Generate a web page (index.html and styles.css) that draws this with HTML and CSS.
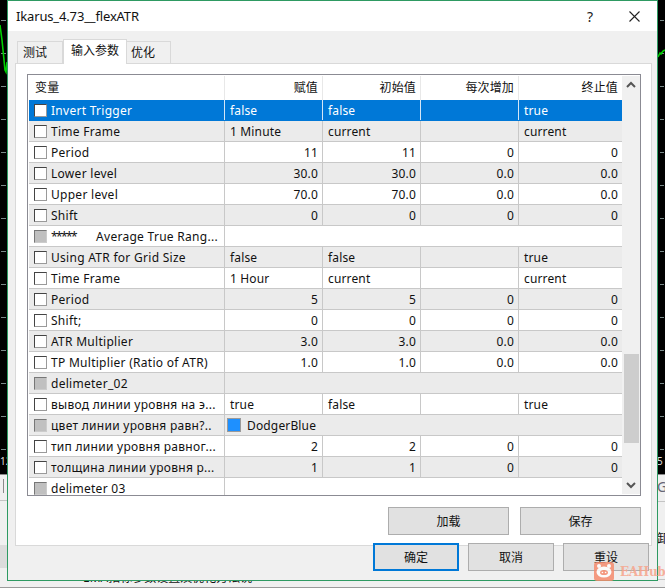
FILE: index.html
```html
<!DOCTYPE html>
<html lang="zh">
<head>
<meta charset="utf-8">
<title>Ikarus_4.73__flexATR</title>
<link rel="stylesheet" href="styles.css">
</head>
<body>
<div class="desktop">
  <div class="strip strip-left"><span class="axis-label">12</span></div>
  <div class="strip strip-right"><span class="axis-label axis-label-right">5</span></div>
  <svg class="chart" width="665" height="80" viewBox="0 0 665 80">
    <polyline points="0,25 2,40 3,50 4,60 5,70 6,72 7,62" fill="none" stroke="#00d000" stroke-width="1.6"/>
    <polyline points="658,57 660,53 661,54 663,51 665,50" fill="none" stroke="#00d000" stroke-width="1.6"/>
  </svg>
  <div class="under-left"><i class="under-tick"></i></div>
  <div class="under-left-band"></div>
  <div class="under-right"><span class="under-g">G</span></div>
  <div class="under-right-band"><span class="under-zh">卸</span></div>
  <div class="under-bottom"><span class="under-text">EMA指标参数设置及优化方法说</span></div>

  <main class="dialog">
    <header class="titlebar">
      <span class="title">Ikarus_4.73__flexATR</span>
      <span class="help">?</span>
      <svg class="close" width="11" height="11" viewBox="0 0 11 11"><path d="M0.5 0.5 L10.5 10.5 M10.5 0.5 L0.5 10.5" stroke="#222" stroke-width="1.1" fill="none"/></svg>
    </header>
    <div class="body">
      <nav class="tabs">
        <span class="tab">测试</span>
        <span class="tab tab-active">输入参数</span>
        <span class="tab tab-last">优化</span>
      </nav>
      <section class="panel">
        <div class="list">
          <div class="table">
            <div class="row head">
              <div class="cell cell-var">变量</div>
              <div class="cell r">赋值</div>
              <div class="cell r">初始值</div>
              <div class="cell r">每次增加</div>
              <div class="cell r">终止值</div>
            </div>
            <div class="row selected"><div class="cell name"><i class="check"></i>Invert Trigger</div><div class="cell">false</div><div class="cell">false</div><div class="cell"></div><div class="cell">true</div></div>
            <div class="row alt"><div class="cell name"><i class="check"></i>Time Frame</div><div class="cell">1 Minute</div><div class="cell">current</div><div class="cell"></div><div class="cell">current</div></div>
            <div class="row"><div class="cell name"><i class="check"></i>Period</div><div class="cell r">11</div><div class="cell r">11</div><div class="cell r">0</div><div class="cell r">0</div></div>
            <div class="row alt"><div class="cell name"><i class="check"></i>Lower level</div><div class="cell r">30.0</div><div class="cell r">30.0</div><div class="cell r">0.0</div><div class="cell r">0.0</div></div>
            <div class="row"><div class="cell name"><i class="check"></i>Upper level</div><div class="cell r">70.0</div><div class="cell r">70.0</div><div class="cell r">0.0</div><div class="cell r">0.0</div></div>
            <div class="row alt"><div class="cell name"><i class="check"></i>Shift</div><div class="cell r">0</div><div class="cell r">0</div><div class="cell r">0</div><div class="cell r">0</div></div>
            <div class="row group"><div class="cell name"><i class="check check-group"></i><span class="stars">*****</span><span>Average True Rang...</span></div><div class="cell span"></div></div>
            <div class="row alt"><div class="cell name"><i class="check"></i>Using ATR for Grid Size</div><div class="cell">false</div><div class="cell">false</div><div class="cell"></div><div class="cell">true</div></div>
            <div class="row"><div class="cell name"><i class="check"></i>Time Frame</div><div class="cell">1 Hour</div><div class="cell">current</div><div class="cell"></div><div class="cell">current</div></div>
            <div class="row alt"><div class="cell name"><i class="check"></i>Period</div><div class="cell r">5</div><div class="cell r">5</div><div class="cell r">0</div><div class="cell r">0</div></div>
            <div class="row"><div class="cell name"><i class="check"></i>Shift;</div><div class="cell r">0</div><div class="cell r">0</div><div class="cell r">0</div><div class="cell r">0</div></div>
            <div class="row alt"><div class="cell name"><i class="check"></i>ATR Multiplier</div><div class="cell r">3.0</div><div class="cell r">3.0</div><div class="cell r">0.0</div><div class="cell r">0.0</div></div>
            <div class="row"><div class="cell name"><i class="check"></i>TP Multiplier (Ratio of ATR)</div><div class="cell r">1.0</div><div class="cell r">1.0</div><div class="cell r">0.0</div><div class="cell r">0.0</div></div>
            <div class="row alt group"><div class="cell name"><i class="check check-group"></i>delimeter_02</div><div class="cell span"></div></div>
            <div class="row"><div class="cell name"><i class="check"></i>вывод линии уровня на э...</div><div class="cell">true</div><div class="cell">false</div><div class="cell"></div><div class="cell">true</div></div>
            <div class="row alt group"><div class="cell name"><i class="check check-group"></i>цвет линии уровня равн?..</div><div class="cell span colour"><i class="swatch"></i>DodgerBlue</div></div>
            <div class="row"><div class="cell name"><i class="check"></i>тип линии уровня равног...</div><div class="cell r">2</div><div class="cell r">2</div><div class="cell r">0</div><div class="cell r">0</div></div>
            <div class="row alt"><div class="cell name"><i class="check"></i>толщина линии уровня р...</div><div class="cell r">1</div><div class="cell r">1</div><div class="cell r">0</div><div class="cell r">0</div></div>
            <div class="row group"><div class="cell name"><i class="check check-group"></i>delimeter 03</div><div class="cell span"></div></div>
          </div>
          <div class="scrollbar">
            <svg class="arrow" width="18" height="18" viewBox="0 0 18 18"><path d="M5 11 L9 7 L13 11" stroke="#555" stroke-width="2" fill="none"/></svg>
            <div class="thumb"></div>
            <svg class="arrow arrow-down" width="18" height="18" viewBox="0 0 18 18"><path d="M5 7 L9 11 L13 7" stroke="#555" stroke-width="2" fill="none"/></svg>
          </div>
        </div>
        <div class="panel-actions">
          <button class="btn btn-wide">加载</button>
          <button class="btn btn-wide">保存</button>
        </div>
      </section>
      <footer class="footer">
        <button class="btn btn-main btn-default">确定</button>
        <button class="btn btn-main">取消</button>
        <button class="btn btn-main">重设</button>
      </footer>
    </div>
  </main>

  <div class="watermark">
    <svg class="pig" width="20" height="19" viewBox="0 0 20 19">
      <rect width="20" height="19" rx="3" fill="#f58c6e"/>
      <circle cx="5" cy="4" r="2" fill="#fff"/>
      <circle cx="15" cy="4" r="2" fill="#fff"/>
      <ellipse cx="10" cy="10" rx="7.5" ry="5.5" fill="#fff"/>
      <ellipse cx="10" cy="10.5" rx="4" ry="2.6" fill="#f58c6e"/>
      <circle cx="8.4" cy="10.5" r="0.8" fill="#fff"/>
      <circle cx="11.6" cy="10.5" r="0.8" fill="#fff"/>
    </svg>
    <span class="wm-text">EAHub</span>
  </div>
</div>
</body>
</html>
```

FILE: styles.css
```css
* { box-sizing: border-box; }
html, body { margin: 0; padding: 0; }
body {
  font-family: "Noto Sans", "Noto Sans CJK SC", sans-serif;
  font-size: 12px;
  color: #111;
}
.desktop {
  position: relative;
  width: 665px;
  height: 588px;
  overflow: hidden;
  background: #f0f0f0;
}
.strip {
  position: absolute;
  top: 0;
  height: 474px;
  width: 8px;
  background-color: #000;
  background-image: repeating-linear-gradient(to bottom, transparent 0, transparent 20px, #7a8a8a 20px, #7a8a8a 21px, transparent 21px, transparent 33px);
  background-repeat: no-repeat;
}
.strip-left { left: 0; background-size: 5px 450px; background-position: 1px 0; }
.strip-right { right: 0; background-size: 4px 450px; background-position: 3px 0; }
.axis-label {
  position: absolute;
  left: 0;
  top: 455px;
  font-size: 10px;
  line-height: 13px;
  color: #ddd;
}
.axis-label-right { left: 0; }
.chart { position: absolute; left: 0; top: 0; }
.under-left {
  position: absolute;
  left: 0;
  top: 474px;
  width: 8px;
  height: 27px;
  border-top: 1px solid #8a8a8a;
  border-bottom: 1px solid #c4c4c4;
  background: #f0f0f0;
}
.under-tick {
  display: block;
  width: 1px;
  height: 14px;
  margin: 4px 0 0 3px;
  background: #8a8a8a;
}
.under-left-band {
  position: absolute;
  left: 0;
  top: 545px;
  width: 8px;
  height: 23px;
  background: #dcdcdc;
}
.under-right {
  position: absolute;
  right: 0;
  top: 474px;
  width: 8px;
  height: 28px;
  border-top: 1px solid #8a8a8a;
  border-bottom: 1px solid #c4c4c4;
  overflow: hidden;
}
.under-g { font-size: 14px; line-height: 24px; color: #667; }
.under-right-band {
  position: absolute;
  right: 0;
  top: 530px;
  width: 8px;
  height: 50px;
  overflow: hidden;
  border-bottom: 1px solid #c4c4c4;
}
.under-zh { font-size: 12px; line-height: 14px; }
.under-bottom {
  position: absolute;
  left: 0;
  top: 580px;
  width: 665px;
  height: 8px;
  overflow: hidden;
  background: #f0f0f0;
  border-bottom: 1px solid #9a9a9a;
  padding-left: 83px;
}
.under-text { display: block; margin-top: -9px; font-size: 12px; line-height: 14px; white-space: nowrap; }

.dialog {
  position: absolute;
  left: 7px;
  top: 0;
  width: 651px;
  height: 581px;
  background: #f0f0f0;
  border: 1px solid #2e9a62;
  display: flex;
  flex-direction: column;
}
.titlebar {
  height: 30px;
  flex: none;
  background: #fff;
  display: flex;
  align-items: center;
  padding: 0 17px 0 8px;
}
.title { font-size: 13px; letter-spacing: -0.15px; color: #111; flex: 1; }
.help { font-size: 14px; margin-right: 36px; color: #222; }
.close { display: block; }
.body { flex: 1; padding: 9px 5px 0 7px; display: flex; flex-direction: column; }
.tabs { display: flex; align-items: flex-end; height: 24px; padding-left: 2px; flex: none; position: relative; z-index: 1; }
.tab {
  height: 22px;
  margin-bottom: 1px;
  padding: 3px 0 0 5px;
  width: 46px;
  line-height: 16px;
  background: #f0f0f0;
  border: 1px solid #d9d9d9;
  border-bottom: 0;
}
.tab-active {
  width: 64px;
  height: 25px;
  margin-bottom: 0;
  padding: 3px 0 0 7px;
  background: #fff;
  border-bottom: 0;
}
.tab-last { width: 44px; border-left: 0; padding-left: 4px; }
.panel {
  flex: none;
  height: 483px;
  margin-top: -1px;
  background: #fff;
  border: 1px solid #d9d9d9;
  padding: 10px 10px 0 11px;
}
.list {
  height: 422px;
  border: 1px solid #8b8b93;
  padding: 1px 0 0 1px;
  display: flex;
  background: #fff;
  overflow: hidden;
}
.table { width: 593px; flex: none; overflow: hidden; }
.row {
  display: grid;
  grid-template-columns: 196px 98px 98px 98px 103px;
  height: 21px;
  background: #fff;
  border-bottom: 1px solid #c8c8c8;
}
.row.alt { background: #ebebeb; }
.row.selected { background: #0078d7; color: #fff; border-bottom-color: #0078d7; }
.row.head { height: 24px; border-bottom: 0; }
.row.head .cell { border-right-color: #e8e8e8; line-height: 23px; }
.row.head .cell-var { padding-left: 6px; }
.cell {
  padding: 0 4px 0 5px;
  border-right: 1px solid #c8c8c8;
  line-height: 21px;
  white-space: nowrap;
  overflow: hidden;
  letter-spacing: 0.15px;
}
.row .cell:last-child { border-right: 0; }
.selected .cell { border-right-color: #d4e6f6; }
.cell.r { text-align: right; }
.cell.span { grid-column: 2 / 6; }
.cell.name { display: flex; align-items: center; gap: 4px; letter-spacing: 0.28px; padding-top: 1px; }
.stars { letter-spacing: -1.6px; margin-right: 16px; }
.check {
  display: block;
  flex: none;
  width: 13px;
  height: 13px;
  margin-top: -1px;
  background: #fff;
  border: 1px solid #9a9a9a;
  border-top-color: #444;
  border-left-color: #444;
}
.check-group { background: #c0c0c0; border-color: #777 #ccc #ccc #777; }
.colour { display: flex; align-items: center; padding-left: 2px; gap: 6px; }
.swatch {
  display: block;
  width: 14px;
  height: 14px;
  background: #1e90ff;
  border: 1px solid #9a9a9a;
}
.scrollbar {
  width: 18px;
  flex: none;
  background: #f0f0f0;
  margin-bottom: 1px;
  position: relative;
  display: flex;
  flex-direction: column;
  align-items: center;
}
.arrow { display: block; flex: none; }
.thumb {
  width: 15px;
  height: 89px;
  margin-top: 260px;
  background: #cdcdcd;
}
.arrow-down { margin-top: auto; }
.panel-actions {
  display: flex;
  justify-content: flex-end;
  gap: 11px;
  padding-top: 11px;
  margin-right: 0;
}
.btn {
  font-family: inherit;
  font-size: 12px;
  color: #111;
  background: #e1e1e1;
  border: 1px solid #adadad;
  padding: 0;
  height: 28px;
}
.btn-wide { width: 121px; }
.btn-main { width: 86px; }
.btn-default { border: 2px solid #0078d7; }
.footer {
  display: flex;
  gap: 8px;
  margin-top: -3px;
  padding-left: 358px;
  position: relative;
}
.footer .btn + .btn { margin-left: 1px; }
.watermark {
  position: absolute;
  left: 594px;
  top: 562px;
  display: flex;
  align-items: center;
  gap: 6px;
  opacity: 0.85;
}
.pig { display: block; }
.wm-text {
  font-family: "DejaVu Serif", serif;
  font-weight: 700;
  font-size: 12px;
  letter-spacing: -0.3px;
  color: #f7a48c;
}
```
